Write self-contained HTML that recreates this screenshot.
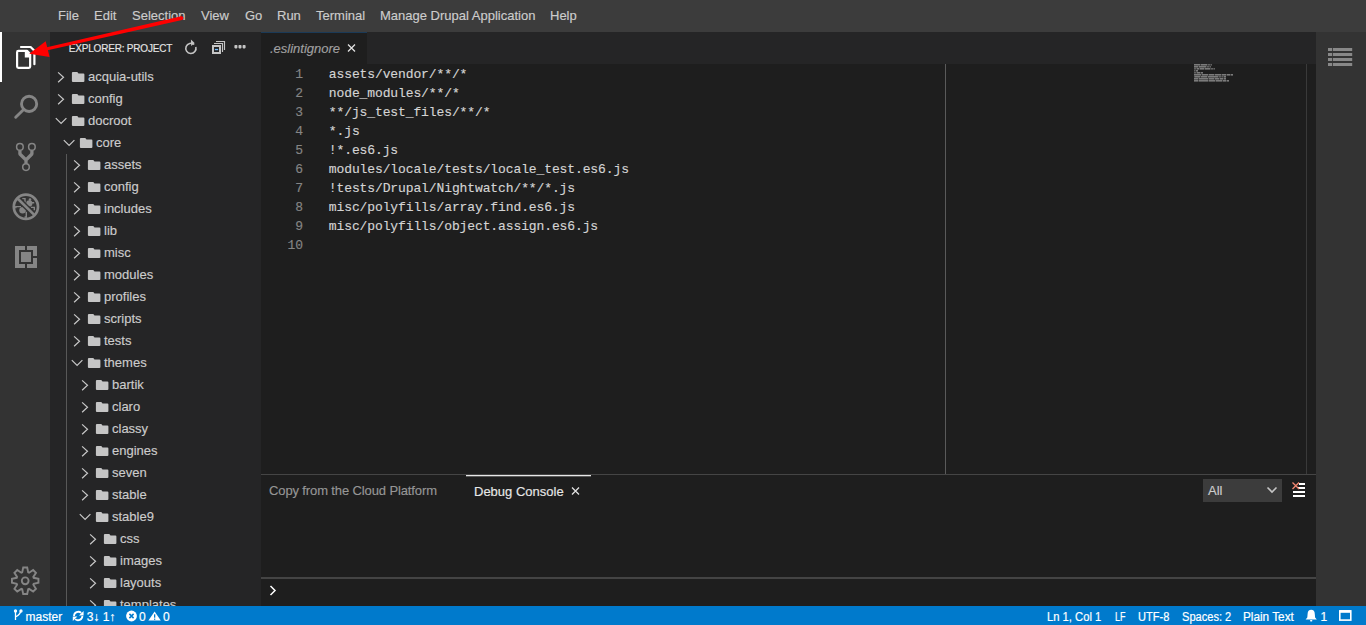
<!DOCTYPE html>
<html><head><meta charset="utf-8">
<style>
*{margin:0;padding:0;box-sizing:border-box}
html,body{width:1366px;height:625px;overflow:hidden;background:#1e1e1e;font-family:"Liberation Sans",sans-serif;font-size:13px;color:#cccccc}
.a{position:absolute}
.t{position:absolute;white-space:nowrap;-webkit-text-stroke:0.15px currentColor}
svg{position:absolute;overflow:visible}
</style></head><body>

<div class="a" style="left:0;top:0;width:1366px;height:32px;background:#3c3c3c">
<span class="t" style="left:58px;top:8px;color:#cccccc">File</span>
<span class="t" style="left:94px;top:8px;color:#cccccc">Edit</span>
<span class="t" style="left:132px;top:8px;color:#cccccc">Selection</span>
<span class="t" style="left:201px;top:8px;color:#cccccc">View</span>
<span class="t" style="left:245px;top:8px;color:#cccccc">Go</span>
<span class="t" style="left:277px;top:8px;color:#cccccc">Run</span>
<span class="t" style="left:316px;top:8px;color:#cccccc">Terminal</span>
<span class="t" style="left:380px;top:8px;color:#cccccc">Manage Drupal Application</span>
<span class="t" style="left:550px;top:8px;color:#cccccc">Help</span>
</div>
<div class="a" style="left:0;top:32px;width:50px;height:574px;background:#333333"></div>
<div class="a" style="left:0;top:32px;width:2px;height:50px;background:#ffffff"></div>
<svg style="left:0;top:0" width="50" height="625" viewBox="0 0 50 625">
<g fill="none" stroke="#ffffff" stroke-width="2.2" stroke-linejoin="round" stroke-linecap="round">
<path d="M17.1 52.2 Q17.1 50.9 18.4 50.9 H27 L30.15 54 V66.5 Q30.15 67.8 28.9 67.8 H18.4 Q17.1 67.8 17.1 66.5 Z"/>
<path d="M21 47 H30.6 L34.4 50.8 V64.2"/>
</g>
<path d="M24.8 51 H27 L30.1 54.1 V57.4 H24.8 Z" fill="#ffffff"/>
<g fill="none" stroke="#858585" stroke-width="2.9" stroke-linecap="round">
<circle cx="29.1" cy="103.9" r="7.6"/>
<path d="M23.9 109.3 L15.7 117.3"/>
</g>
<g fill="none" stroke="#858585" stroke-width="1.5">
<circle cx="19.9" cy="146.9" r="3.3"/><circle cx="31.9" cy="146.9" r="3.3"/><circle cx="26" cy="167.1" r="3.3"/>
</g>
<g fill="none" stroke="#858585" stroke-width="3.3" stroke-linejoin="bevel">
<path d="M19.9 150.5 V154 L26 160 V163.8 M31.9 150.5 V154 L26 160"/>
</g>
<g fill="#858585">
<circle cx="22.6" cy="210.2" r="3.3"/>
<circle cx="29.3" cy="203.4" r="3.1"/>
<circle cx="30" cy="199.6" r="1.3"/>
</g>
<g fill="none" stroke="#858585" stroke-width="1.4">
<path d="M22.3 198.6 H25 V202.8 M15.8 208.2 V206.6 H21 M31 207.4 H34.3 V210.2 M31.5 202.8 H34.2 M26.3 211.8 V217 H24.6"/>
</g>
<path d="M17.8 198.8 L34 214.6" stroke="#333333" stroke-width="5.4"/>
<path d="M17.8 198.8 L34 214.6" stroke="#858585" stroke-width="2.6"/>
<circle cx="25.9" cy="206.8" r="12.1" fill="none" stroke="#858585" stroke-width="2.7"/>
<g fill="#858585">
<path d="M15 246 H25 V250 H19 V264 H25 V268 H15 Z"/>
<path d="M27 246 H37 V256 H33 V250 H27 Z"/>
<path d="M27 264 H33 V258 H37 V268 H27 Z"/>
<rect x="21" y="252" width="10" height="10"/>
</g>
</svg>
<svg style="left:0;top:0" width="50" height="625"><path d="M22.20 572.32 L23.20 567.55 L27.20 567.55 L28.20 572.32 L29.08 572.68 L33.15 570.02 L35.98 572.85 L33.32 576.92 L33.68 577.80 L38.45 578.80 L38.45 582.80 L33.68 583.80 L33.32 584.68 L35.98 588.75 L33.15 591.58 L29.08 588.92 L28.20 589.28 L27.20 594.05 L23.20 594.05 L22.20 589.28 L21.32 588.92 L17.25 591.58 L14.42 588.75 L17.08 584.68 L16.72 583.80 L11.95 582.80 L11.95 578.80 L16.72 577.80 L17.08 576.92 L14.42 572.85 L17.25 570.02 L21.32 572.68 Z" fill="none" stroke="#858585" stroke-width="1.9" stroke-linejoin="miter"/>
<circle cx="25.2" cy="580.8" r="3.4" fill="none" stroke="#858585" stroke-width="1.9"/></svg>
<div class="a" style="left:50px;top:32px;width:211px;height:574px;background:#252526;overflow:hidden">
<span class="t" style="left:18.8px;top:11px;font-size:10px;letter-spacing:-0.2px;color:#e4e4e4">EXPLORER: PROJECT</span>
<svg style="left:0;top:0" width="211" height="574">
<g fill="none" stroke="#c5c5c5" stroke-width="1.6">
<path d="M144.2 12.5 A5.1 5.1 0 1 0 145.8 15"/>
</g>
<path d="M140.9 7.4 L144.6 11 L141.2 13.9 Z" fill="#c5c5c5"/>
<rect x="163" y="14" width="7" height="7" fill="none" stroke="#c5c5c5" stroke-width="2"/>
<path d="M164 11.5 H172.5 V20 M166 9.5 H174.5 V18" fill="none" stroke="#c5c5c5" stroke-width="1.15"/>
<rect x="164.9" y="16.9" width="3.2" height="1.3" fill="#75beff"/>
<g fill="#c5c5c5"><rect x="184.4" y="13" width="3" height="3.4" rx="0.8"/><rect x="188.5" y="13" width="3" height="3.4" rx="0.8"/><rect x="192.6" y="13" width="3" height="3.4" rx="0.8"/></g>
<rect x="16" y="122" width="1" height="452" fill="#585858"/>
</svg>
<svg style="left:0;top:0" width="211" height="574"><path d="M8.1 40.4 L13.5 45.3 L8.1 50.2" fill="none" stroke="#c8c8c8" stroke-width="1.2"/><path d="M21.9 41.1 Q21.9 40.1 22.9 40.1 H27.3 L28.5 41.5 H33.4 Q34.4 41.6 34.4 42.6 V49.0 Q34.4 50.0 33.4 50.0 H22.9 Q21.9 50.0 21.9 49.0 Z" fill="#c5c5c5"/></svg>
<span class="t" style="left:38.0px;top:37px;color:#cccccc">acquia-utils</span>
<svg style="left:0;top:0" width="211" height="574"><path d="M8.1 62.4 L13.5 67.3 L8.1 72.2" fill="none" stroke="#c8c8c8" stroke-width="1.2"/><path d="M21.9 63.1 Q21.9 62.1 22.9 62.1 H27.3 L28.5 63.5 H33.4 Q34.4 63.6 34.4 64.6 V71.0 Q34.4 72.0 33.4 72.0 H22.9 Q21.9 72.0 21.9 71.0 Z" fill="#c5c5c5"/></svg>
<span class="t" style="left:38.0px;top:59px;color:#cccccc">config</span>
<svg style="left:0;top:0" width="211" height="574"><path d="M5.8 86.2 L11.1 91.5 L16.4 86.2" fill="none" stroke="#c8c8c8" stroke-width="1.2"/><path d="M21.9 85.1 Q21.9 84.1 22.9 84.1 H27.3 L28.5 85.5 H33.4 Q34.4 85.6 34.4 86.6 V93.0 Q34.4 94.0 33.4 94.0 H22.9 Q21.9 94.0 21.9 93.0 Z" fill="#c5c5c5"/></svg>
<span class="t" style="left:38.0px;top:81px;color:#cccccc">docroot</span>
<svg style="left:0;top:0" width="211" height="574"><path d="M13.8 108.2 L19.1 113.5 L24.4 108.2" fill="none" stroke="#c8c8c8" stroke-width="1.2"/><path d="M29.9 107.1 Q29.9 106.1 30.9 106.1 H35.3 L36.5 107.5 H41.4 Q42.4 107.6 42.4 108.6 V115.0 Q42.4 116.0 41.4 116.0 H30.9 Q29.9 116.0 29.9 115.0 Z" fill="#c5c5c5"/></svg>
<span class="t" style="left:46.0px;top:103px;color:#cccccc">core</span>
<svg style="left:0;top:0" width="211" height="574"><path d="M24.1 128.4 L29.5 133.3 L24.1 138.2" fill="none" stroke="#c8c8c8" stroke-width="1.2"/><path d="M37.9 129.1 Q37.9 128.1 38.9 128.1 H43.3 L44.5 129.5 H49.4 Q50.4 129.6 50.4 130.6 V137.0 Q50.4 138.0 49.4 138.0 H38.9 Q37.9 138.0 37.9 137.0 Z" fill="#c5c5c5"/></svg>
<span class="t" style="left:54.0px;top:125px;color:#cccccc">assets</span>
<svg style="left:0;top:0" width="211" height="574"><path d="M24.1 150.4 L29.5 155.3 L24.1 160.2" fill="none" stroke="#c8c8c8" stroke-width="1.2"/><path d="M37.9 151.1 Q37.9 150.1 38.9 150.1 H43.3 L44.5 151.5 H49.4 Q50.4 151.6 50.4 152.6 V159.0 Q50.4 160.0 49.4 160.0 H38.9 Q37.9 160.0 37.9 159.0 Z" fill="#c5c5c5"/></svg>
<span class="t" style="left:54.0px;top:147px;color:#cccccc">config</span>
<svg style="left:0;top:0" width="211" height="574"><path d="M24.1 172.4 L29.5 177.3 L24.1 182.2" fill="none" stroke="#c8c8c8" stroke-width="1.2"/><path d="M37.9 173.1 Q37.9 172.1 38.9 172.1 H43.3 L44.5 173.5 H49.4 Q50.4 173.6 50.4 174.6 V181.0 Q50.4 182.0 49.4 182.0 H38.9 Q37.9 182.0 37.9 181.0 Z" fill="#c5c5c5"/></svg>
<span class="t" style="left:54.0px;top:169px;color:#cccccc">includes</span>
<svg style="left:0;top:0" width="211" height="574"><path d="M24.1 194.4 L29.5 199.3 L24.1 204.2" fill="none" stroke="#c8c8c8" stroke-width="1.2"/><path d="M37.9 195.1 Q37.9 194.1 38.9 194.1 H43.3 L44.5 195.5 H49.4 Q50.4 195.6 50.4 196.6 V203.0 Q50.4 204.0 49.4 204.0 H38.9 Q37.9 204.0 37.9 203.0 Z" fill="#c5c5c5"/></svg>
<span class="t" style="left:54.0px;top:191px;color:#cccccc">lib</span>
<svg style="left:0;top:0" width="211" height="574"><path d="M24.1 216.4 L29.5 221.3 L24.1 226.2" fill="none" stroke="#c8c8c8" stroke-width="1.2"/><path d="M37.9 217.1 Q37.9 216.1 38.9 216.1 H43.3 L44.5 217.5 H49.4 Q50.4 217.6 50.4 218.6 V225.0 Q50.4 226.0 49.4 226.0 H38.9 Q37.9 226.0 37.9 225.0 Z" fill="#c5c5c5"/></svg>
<span class="t" style="left:54.0px;top:213px;color:#cccccc">misc</span>
<svg style="left:0;top:0" width="211" height="574"><path d="M24.1 238.4 L29.5 243.3 L24.1 248.2" fill="none" stroke="#c8c8c8" stroke-width="1.2"/><path d="M37.9 239.1 Q37.9 238.1 38.9 238.1 H43.3 L44.5 239.5 H49.4 Q50.4 239.6 50.4 240.6 V247.0 Q50.4 248.0 49.4 248.0 H38.9 Q37.9 248.0 37.9 247.0 Z" fill="#c5c5c5"/></svg>
<span class="t" style="left:54.0px;top:235px;color:#cccccc">modules</span>
<svg style="left:0;top:0" width="211" height="574"><path d="M24.1 260.4 L29.5 265.3 L24.1 270.2" fill="none" stroke="#c8c8c8" stroke-width="1.2"/><path d="M37.9 261.1 Q37.9 260.1 38.9 260.1 H43.3 L44.5 261.5 H49.4 Q50.4 261.6 50.4 262.6 V269.0 Q50.4 270.0 49.4 270.0 H38.9 Q37.9 270.0 37.9 269.0 Z" fill="#c5c5c5"/></svg>
<span class="t" style="left:54.0px;top:257px;color:#cccccc">profiles</span>
<svg style="left:0;top:0" width="211" height="574"><path d="M24.1 282.4 L29.5 287.3 L24.1 292.2" fill="none" stroke="#c8c8c8" stroke-width="1.2"/><path d="M37.9 283.1 Q37.9 282.1 38.9 282.1 H43.3 L44.5 283.5 H49.4 Q50.4 283.6 50.4 284.6 V291.0 Q50.4 292.0 49.4 292.0 H38.9 Q37.9 292.0 37.9 291.0 Z" fill="#c5c5c5"/></svg>
<span class="t" style="left:54.0px;top:279px;color:#cccccc">scripts</span>
<svg style="left:0;top:0" width="211" height="574"><path d="M24.1 304.4 L29.5 309.3 L24.1 314.2" fill="none" stroke="#c8c8c8" stroke-width="1.2"/><path d="M37.9 305.1 Q37.9 304.1 38.9 304.1 H43.3 L44.5 305.5 H49.4 Q50.4 305.6 50.4 306.6 V313.0 Q50.4 314.0 49.4 314.0 H38.9 Q37.9 314.0 37.9 313.0 Z" fill="#c5c5c5"/></svg>
<span class="t" style="left:54.0px;top:301px;color:#cccccc">tests</span>
<svg style="left:0;top:0" width="211" height="574"><path d="M21.8 328.2 L27.1 333.5 L32.4 328.2" fill="none" stroke="#c8c8c8" stroke-width="1.2"/><path d="M37.9 327.1 Q37.9 326.1 38.9 326.1 H43.3 L44.5 327.5 H49.4 Q50.4 327.6 50.4 328.6 V335.0 Q50.4 336.0 49.4 336.0 H38.9 Q37.9 336.0 37.9 335.0 Z" fill="#c5c5c5"/></svg>
<span class="t" style="left:54.0px;top:323px;color:#cccccc">themes</span>
<svg style="left:0;top:0" width="211" height="574"><path d="M32.1 348.4 L37.5 353.3 L32.1 358.2" fill="none" stroke="#c8c8c8" stroke-width="1.2"/><path d="M45.9 349.1 Q45.9 348.1 46.9 348.1 H51.3 L52.5 349.5 H57.4 Q58.4 349.6 58.4 350.6 V357.0 Q58.4 358.0 57.4 358.0 H46.9 Q45.9 358.0 45.9 357.0 Z" fill="#c5c5c5"/></svg>
<span class="t" style="left:62.0px;top:345px;color:#cccccc">bartik</span>
<svg style="left:0;top:0" width="211" height="574"><path d="M32.1 370.4 L37.5 375.3 L32.1 380.2" fill="none" stroke="#c8c8c8" stroke-width="1.2"/><path d="M45.9 371.1 Q45.9 370.1 46.9 370.1 H51.3 L52.5 371.5 H57.4 Q58.4 371.6 58.4 372.6 V379.0 Q58.4 380.0 57.4 380.0 H46.9 Q45.9 380.0 45.9 379.0 Z" fill="#c5c5c5"/></svg>
<span class="t" style="left:62.0px;top:367px;color:#cccccc">claro</span>
<svg style="left:0;top:0" width="211" height="574"><path d="M32.1 392.4 L37.5 397.3 L32.1 402.2" fill="none" stroke="#c8c8c8" stroke-width="1.2"/><path d="M45.9 393.1 Q45.9 392.1 46.9 392.1 H51.3 L52.5 393.5 H57.4 Q58.4 393.6 58.4 394.6 V401.0 Q58.4 402.0 57.4 402.0 H46.9 Q45.9 402.0 45.9 401.0 Z" fill="#c5c5c5"/></svg>
<span class="t" style="left:62.0px;top:389px;color:#cccccc">classy</span>
<svg style="left:0;top:0" width="211" height="574"><path d="M32.1 414.4 L37.5 419.3 L32.1 424.2" fill="none" stroke="#c8c8c8" stroke-width="1.2"/><path d="M45.9 415.1 Q45.9 414.1 46.9 414.1 H51.3 L52.5 415.5 H57.4 Q58.4 415.6 58.4 416.6 V423.0 Q58.4 424.0 57.4 424.0 H46.9 Q45.9 424.0 45.9 423.0 Z" fill="#c5c5c5"/></svg>
<span class="t" style="left:62.0px;top:411px;color:#cccccc">engines</span>
<svg style="left:0;top:0" width="211" height="574"><path d="M32.1 436.4 L37.5 441.3 L32.1 446.2" fill="none" stroke="#c8c8c8" stroke-width="1.2"/><path d="M45.9 437.1 Q45.9 436.1 46.9 436.1 H51.3 L52.5 437.5 H57.4 Q58.4 437.6 58.4 438.6 V445.0 Q58.4 446.0 57.4 446.0 H46.9 Q45.9 446.0 45.9 445.0 Z" fill="#c5c5c5"/></svg>
<span class="t" style="left:62.0px;top:433px;color:#cccccc">seven</span>
<svg style="left:0;top:0" width="211" height="574"><path d="M32.1 458.4 L37.5 463.3 L32.1 468.2" fill="none" stroke="#c8c8c8" stroke-width="1.2"/><path d="M45.9 459.1 Q45.9 458.1 46.9 458.1 H51.3 L52.5 459.5 H57.4 Q58.4 459.6 58.4 460.6 V467.0 Q58.4 468.0 57.4 468.0 H46.9 Q45.9 468.0 45.9 467.0 Z" fill="#c5c5c5"/></svg>
<span class="t" style="left:62.0px;top:455px;color:#cccccc">stable</span>
<svg style="left:0;top:0" width="211" height="574"><path d="M29.8 482.2 L35.1 487.5 L40.4 482.2" fill="none" stroke="#c8c8c8" stroke-width="1.2"/><path d="M45.9 481.1 Q45.9 480.1 46.9 480.1 H51.3 L52.5 481.5 H57.4 Q58.4 481.6 58.4 482.6 V489.0 Q58.4 490.0 57.4 490.0 H46.9 Q45.9 490.0 45.9 489.0 Z" fill="#c5c5c5"/></svg>
<span class="t" style="left:62.0px;top:477px;color:#cccccc">stable9</span>
<svg style="left:0;top:0" width="211" height="574"><path d="M40.1 502.4 L45.5 507.3 L40.1 512.2" fill="none" stroke="#c8c8c8" stroke-width="1.2"/><path d="M53.9 503.1 Q53.9 502.1 54.9 502.1 H59.3 L60.5 503.5 H65.4 Q66.4 503.6 66.4 504.6 V511.0 Q66.4 512.0 65.4 512.0 H54.9 Q53.9 512.0 53.9 511.0 Z" fill="#c5c5c5"/></svg>
<span class="t" style="left:70.0px;top:499px;color:#cccccc">css</span>
<svg style="left:0;top:0" width="211" height="574"><path d="M40.1 524.4 L45.5 529.3 L40.1 534.2" fill="none" stroke="#c8c8c8" stroke-width="1.2"/><path d="M53.9 525.1 Q53.9 524.1 54.9 524.1 H59.3 L60.5 525.5 H65.4 Q66.4 525.6 66.4 526.6 V533.0 Q66.4 534.0 65.4 534.0 H54.9 Q53.9 534.0 53.9 533.0 Z" fill="#c5c5c5"/></svg>
<span class="t" style="left:70.0px;top:521px;color:#cccccc">images</span>
<svg style="left:0;top:0" width="211" height="574"><path d="M40.1 546.4 L45.5 551.3 L40.1 556.2" fill="none" stroke="#c8c8c8" stroke-width="1.2"/><path d="M53.9 547.1 Q53.9 546.1 54.9 546.1 H59.3 L60.5 547.5 H65.4 Q66.4 547.6 66.4 548.6 V555.0 Q66.4 556.0 65.4 556.0 H54.9 Q53.9 556.0 53.9 555.0 Z" fill="#c5c5c5"/></svg>
<span class="t" style="left:70.0px;top:543px;color:#cccccc">layouts</span>
<svg style="left:0;top:0" width="211" height="574"><path d="M40.1 568.4 L45.5 573.3 L40.1 578.2" fill="none" stroke="#c8c8c8" stroke-width="1.2"/><path d="M53.9 569.1 Q53.9 568.1 54.9 568.1 H59.3 L60.5 569.5 H65.4 Q66.4 569.6 66.4 570.6 V577.0 Q66.4 578.0 65.4 578.0 H54.9 Q53.9 578.0 53.9 577.0 Z" fill="#c5c5c5"/></svg>
<span class="t" style="left:70.0px;top:565px;color:#cccccc">templates</span>
</div>
<div class="a" style="left:261px;top:32px;width:1055px;height:32px;background:#252526"></div>
<div class="a" style="left:261px;top:32px;width:106px;height:32px;background:#1e1e1e;border-top:1px solid #1b3a57"></div>
<span class="t" style="left:270px;top:41px;font-style:italic;color:#a0a0a0">.eslintignore</span>
<svg style="left:0;top:0" width="1366" height="625"><path d="M348 44.5 L355 51.5 M355 44.5 L348 51.5" stroke="#e0e0e0" stroke-width="1.3"/></svg>
<div class="a" style="left:261px;top:64px;width:1055px;height:410px;background:#1e1e1e"></div>
<span class="t" style="left:262px;width:41px;text-align:right;top:65px;line-height:19px;font-family:'Liberation Mono',monospace;font-size:13px;color:#858585">1</span>
<span class="t" style="left:328.8px;top:65px;line-height:19px;font-family:'Liberation Mono',monospace;font-size:13px;letter-spacing:-0.108px;color:#d4d4d4">assets/vendor/**/*</span>
<span class="t" style="left:262px;width:41px;text-align:right;top:84px;line-height:19px;font-family:'Liberation Mono',monospace;font-size:13px;color:#858585">2</span>
<span class="t" style="left:328.8px;top:84px;line-height:19px;font-family:'Liberation Mono',monospace;font-size:13px;letter-spacing:-0.108px;color:#d4d4d4">node_modules/**/*</span>
<span class="t" style="left:262px;width:41px;text-align:right;top:103px;line-height:19px;font-family:'Liberation Mono',monospace;font-size:13px;color:#858585">3</span>
<span class="t" style="left:328.8px;top:103px;line-height:19px;font-family:'Liberation Mono',monospace;font-size:13px;letter-spacing:-0.108px;color:#d4d4d4">**/js_test_files/**/*</span>
<span class="t" style="left:262px;width:41px;text-align:right;top:122px;line-height:19px;font-family:'Liberation Mono',monospace;font-size:13px;color:#858585">4</span>
<span class="t" style="left:328.8px;top:122px;line-height:19px;font-family:'Liberation Mono',monospace;font-size:13px;letter-spacing:-0.108px;color:#d4d4d4">*.js</span>
<span class="t" style="left:262px;width:41px;text-align:right;top:141px;line-height:19px;font-family:'Liberation Mono',monospace;font-size:13px;color:#858585">5</span>
<span class="t" style="left:328.8px;top:141px;line-height:19px;font-family:'Liberation Mono',monospace;font-size:13px;letter-spacing:-0.108px;color:#d4d4d4">!*.es6.js</span>
<span class="t" style="left:262px;width:41px;text-align:right;top:160px;line-height:19px;font-family:'Liberation Mono',monospace;font-size:13px;color:#858585">6</span>
<span class="t" style="left:328.8px;top:160px;line-height:19px;font-family:'Liberation Mono',monospace;font-size:13px;letter-spacing:-0.108px;color:#d4d4d4">modules/locale/tests/locale_test.es6.js</span>
<span class="t" style="left:262px;width:41px;text-align:right;top:179px;line-height:19px;font-family:'Liberation Mono',monospace;font-size:13px;color:#858585">7</span>
<span class="t" style="left:328.8px;top:179px;line-height:19px;font-family:'Liberation Mono',monospace;font-size:13px;letter-spacing:-0.108px;color:#d4d4d4">!tests/Drupal/Nightwatch/**/*.js</span>
<span class="t" style="left:262px;width:41px;text-align:right;top:198px;line-height:19px;font-family:'Liberation Mono',monospace;font-size:13px;color:#858585">8</span>
<span class="t" style="left:328.8px;top:198px;line-height:19px;font-family:'Liberation Mono',monospace;font-size:13px;letter-spacing:-0.108px;color:#d4d4d4">misc/polyfills/array.find.es6.js</span>
<span class="t" style="left:262px;width:41px;text-align:right;top:217px;line-height:19px;font-family:'Liberation Mono',monospace;font-size:13px;color:#858585">9</span>
<span class="t" style="left:328.8px;top:217px;line-height:19px;font-family:'Liberation Mono',monospace;font-size:13px;letter-spacing:-0.108px;color:#d4d4d4">misc/polyfills/object.assign.es6.js</span>
<span class="t" style="left:262px;width:41px;text-align:right;top:236px;line-height:19px;font-family:'Liberation Mono',monospace;font-size:13px;color:#858585">10</span>
<div class="a" style="left:945px;top:64px;width:1px;height:410px;background:#5a5a5a"></div>
<div class="a" style="left:1306px;top:64px;width:1px;height:410px;background:#3a3a3a"></div>
<svg style="left:0;top:0" width="1366" height="625"><g fill="#c8c8c8"><rect x="1194" y="64" width="1" height="1.6" fill-opacity="0.55"/><rect x="1195" y="64" width="1" height="1.6" fill-opacity="0.55"/><rect x="1196" y="64" width="1" height="1.6" fill-opacity="0.55"/><rect x="1197" y="64" width="1" height="1.6" fill-opacity="0.55"/><rect x="1198" y="64" width="1" height="1.6" fill-opacity="0.55"/><rect x="1199" y="64" width="1" height="1.6" fill-opacity="0.55"/><rect x="1200" y="64" width="1" height="1.6" fill-opacity="0.25"/><rect x="1201" y="64" width="1" height="1.6" fill-opacity="0.55"/><rect x="1202" y="64" width="1" height="1.6" fill-opacity="0.55"/><rect x="1203" y="64" width="1" height="1.6" fill-opacity="0.55"/><rect x="1204" y="64" width="1" height="1.6" fill-opacity="0.55"/><rect x="1205" y="64" width="1" height="1.6" fill-opacity="0.55"/><rect x="1206" y="64" width="1" height="1.6" fill-opacity="0.55"/><rect x="1207" y="64" width="1" height="1.6" fill-opacity="0.25"/><rect x="1208" y="64" width="1" height="1.6" fill-opacity="0.4"/><rect x="1209" y="64" width="1" height="1.6" fill-opacity="0.4"/><rect x="1210" y="64" width="1" height="1.6" fill-opacity="0.25"/><rect x="1211" y="64" width="1" height="1.6" fill-opacity="0.4"/><rect x="1194" y="66" width="1" height="1.6" fill-opacity="0.55"/><rect x="1195" y="66" width="1" height="1.6" fill-opacity="0.55"/><rect x="1196" y="66" width="1" height="1.6" fill-opacity="0.55"/><rect x="1197" y="66" width="1" height="1.6" fill-opacity="0.55"/><rect x="1198" y="66" width="1" height="1.6" fill-opacity="0.25"/><rect x="1199" y="66" width="1" height="1.6" fill-opacity="0.55"/><rect x="1200" y="66" width="1" height="1.6" fill-opacity="0.55"/><rect x="1201" y="66" width="1" height="1.6" fill-opacity="0.55"/><rect x="1202" y="66" width="1" height="1.6" fill-opacity="0.55"/><rect x="1203" y="66" width="1" height="1.6" fill-opacity="0.55"/><rect x="1204" y="66" width="1" height="1.6" fill-opacity="0.55"/><rect x="1205" y="66" width="1" height="1.6" fill-opacity="0.55"/><rect x="1206" y="66" width="1" height="1.6" fill-opacity="0.25"/><rect x="1207" y="66" width="1" height="1.6" fill-opacity="0.4"/><rect x="1208" y="66" width="1" height="1.6" fill-opacity="0.4"/><rect x="1209" y="66" width="1" height="1.6" fill-opacity="0.25"/><rect x="1210" y="66" width="1" height="1.6" fill-opacity="0.4"/><rect x="1194" y="68" width="1" height="1.6" fill-opacity="0.4"/><rect x="1195" y="68" width="1" height="1.6" fill-opacity="0.4"/><rect x="1196" y="68" width="1" height="1.6" fill-opacity="0.25"/><rect x="1197" y="68" width="1" height="1.6" fill-opacity="0.55"/><rect x="1198" y="68" width="1" height="1.6" fill-opacity="0.55"/><rect x="1199" y="68" width="1" height="1.6" fill-opacity="0.25"/><rect x="1200" y="68" width="1" height="1.6" fill-opacity="0.55"/><rect x="1201" y="68" width="1" height="1.6" fill-opacity="0.55"/><rect x="1202" y="68" width="1" height="1.6" fill-opacity="0.55"/><rect x="1203" y="68" width="1" height="1.6" fill-opacity="0.55"/><rect x="1204" y="68" width="1" height="1.6" fill-opacity="0.25"/><rect x="1205" y="68" width="1" height="1.6" fill-opacity="0.55"/><rect x="1206" y="68" width="1" height="1.6" fill-opacity="0.55"/><rect x="1207" y="68" width="1" height="1.6" fill-opacity="0.55"/><rect x="1208" y="68" width="1" height="1.6" fill-opacity="0.55"/><rect x="1209" y="68" width="1" height="1.6" fill-opacity="0.55"/><rect x="1210" y="68" width="1" height="1.6" fill-opacity="0.25"/><rect x="1211" y="68" width="1" height="1.6" fill-opacity="0.4"/><rect x="1212" y="68" width="1" height="1.6" fill-opacity="0.4"/><rect x="1213" y="68" width="1" height="1.6" fill-opacity="0.25"/><rect x="1214" y="68" width="1" height="1.6" fill-opacity="0.4"/><rect x="1194" y="70" width="1" height="1.6" fill-opacity="0.4"/><rect x="1195" y="70" width="1" height="1.6" fill-opacity="0.25"/><rect x="1196" y="70" width="1" height="1.6" fill-opacity="0.55"/><rect x="1197" y="70" width="1" height="1.6" fill-opacity="0.55"/><rect x="1194" y="72" width="1" height="1.6" fill-opacity="0.4"/><rect x="1195" y="72" width="1" height="1.6" fill-opacity="0.4"/><rect x="1196" y="72" width="1" height="1.6" fill-opacity="0.25"/><rect x="1197" y="72" width="1" height="1.6" fill-opacity="0.55"/><rect x="1198" y="72" width="1" height="1.6" fill-opacity="0.55"/><rect x="1199" y="72" width="1" height="1.6" fill-opacity="0.55"/><rect x="1200" y="72" width="1" height="1.6" fill-opacity="0.25"/><rect x="1201" y="72" width="1" height="1.6" fill-opacity="0.55"/><rect x="1202" y="72" width="1" height="1.6" fill-opacity="0.55"/><rect x="1194" y="74" width="1" height="1.6" fill-opacity="0.55"/><rect x="1195" y="74" width="1" height="1.6" fill-opacity="0.55"/><rect x="1196" y="74" width="1" height="1.6" fill-opacity="0.55"/><rect x="1197" y="74" width="1" height="1.6" fill-opacity="0.55"/><rect x="1198" y="74" width="1" height="1.6" fill-opacity="0.55"/><rect x="1199" y="74" width="1" height="1.6" fill-opacity="0.55"/><rect x="1200" y="74" width="1" height="1.6" fill-opacity="0.55"/><rect x="1201" y="74" width="1" height="1.6" fill-opacity="0.25"/><rect x="1202" y="74" width="1" height="1.6" fill-opacity="0.55"/><rect x="1203" y="74" width="1" height="1.6" fill-opacity="0.55"/><rect x="1204" y="74" width="1" height="1.6" fill-opacity="0.55"/><rect x="1205" y="74" width="1" height="1.6" fill-opacity="0.55"/><rect x="1206" y="74" width="1" height="1.6" fill-opacity="0.55"/><rect x="1207" y="74" width="1" height="1.6" fill-opacity="0.55"/><rect x="1208" y="74" width="1" height="1.6" fill-opacity="0.25"/><rect x="1209" y="74" width="1" height="1.6" fill-opacity="0.55"/><rect x="1210" y="74" width="1" height="1.6" fill-opacity="0.55"/><rect x="1211" y="74" width="1" height="1.6" fill-opacity="0.55"/><rect x="1212" y="74" width="1" height="1.6" fill-opacity="0.55"/><rect x="1213" y="74" width="1" height="1.6" fill-opacity="0.55"/><rect x="1214" y="74" width="1" height="1.6" fill-opacity="0.25"/><rect x="1215" y="74" width="1" height="1.6" fill-opacity="0.55"/><rect x="1216" y="74" width="1" height="1.6" fill-opacity="0.55"/><rect x="1217" y="74" width="1" height="1.6" fill-opacity="0.55"/><rect x="1218" y="74" width="1" height="1.6" fill-opacity="0.55"/><rect x="1219" y="74" width="1" height="1.6" fill-opacity="0.55"/><rect x="1220" y="74" width="1" height="1.6" fill-opacity="0.55"/><rect x="1221" y="74" width="1" height="1.6" fill-opacity="0.25"/><rect x="1222" y="74" width="1" height="1.6" fill-opacity="0.55"/><rect x="1223" y="74" width="1" height="1.6" fill-opacity="0.55"/><rect x="1224" y="74" width="1" height="1.6" fill-opacity="0.55"/><rect x="1225" y="74" width="1" height="1.6" fill-opacity="0.55"/><rect x="1226" y="74" width="1" height="1.6" fill-opacity="0.25"/><rect x="1227" y="74" width="1" height="1.6" fill-opacity="0.55"/><rect x="1228" y="74" width="1" height="1.6" fill-opacity="0.55"/><rect x="1229" y="74" width="1" height="1.6" fill-opacity="0.55"/><rect x="1230" y="74" width="1" height="1.6" fill-opacity="0.25"/><rect x="1231" y="74" width="1" height="1.6" fill-opacity="0.55"/><rect x="1232" y="74" width="1" height="1.6" fill-opacity="0.55"/><rect x="1194" y="76" width="1" height="1.6" fill-opacity="0.4"/><rect x="1195" y="76" width="1" height="1.6" fill-opacity="0.55"/><rect x="1196" y="76" width="1" height="1.6" fill-opacity="0.55"/><rect x="1197" y="76" width="1" height="1.6" fill-opacity="0.55"/><rect x="1198" y="76" width="1" height="1.6" fill-opacity="0.55"/><rect x="1199" y="76" width="1" height="1.6" fill-opacity="0.55"/><rect x="1200" y="76" width="1" height="1.6" fill-opacity="0.25"/><rect x="1201" y="76" width="1" height="1.6" fill-opacity="0.55"/><rect x="1202" y="76" width="1" height="1.6" fill-opacity="0.55"/><rect x="1203" y="76" width="1" height="1.6" fill-opacity="0.55"/><rect x="1204" y="76" width="1" height="1.6" fill-opacity="0.55"/><rect x="1205" y="76" width="1" height="1.6" fill-opacity="0.55"/><rect x="1206" y="76" width="1" height="1.6" fill-opacity="0.55"/><rect x="1207" y="76" width="1" height="1.6" fill-opacity="0.25"/><rect x="1208" y="76" width="1" height="1.6" fill-opacity="0.55"/><rect x="1209" y="76" width="1" height="1.6" fill-opacity="0.55"/><rect x="1210" y="76" width="1" height="1.6" fill-opacity="0.55"/><rect x="1211" y="76" width="1" height="1.6" fill-opacity="0.55"/><rect x="1212" y="76" width="1" height="1.6" fill-opacity="0.55"/><rect x="1213" y="76" width="1" height="1.6" fill-opacity="0.55"/><rect x="1214" y="76" width="1" height="1.6" fill-opacity="0.55"/><rect x="1215" y="76" width="1" height="1.6" fill-opacity="0.55"/><rect x="1216" y="76" width="1" height="1.6" fill-opacity="0.55"/><rect x="1217" y="76" width="1" height="1.6" fill-opacity="0.55"/><rect x="1218" y="76" width="1" height="1.6" fill-opacity="0.25"/><rect x="1219" y="76" width="1" height="1.6" fill-opacity="0.4"/><rect x="1220" y="76" width="1" height="1.6" fill-opacity="0.4"/><rect x="1221" y="76" width="1" height="1.6" fill-opacity="0.25"/><rect x="1222" y="76" width="1" height="1.6" fill-opacity="0.4"/><rect x="1223" y="76" width="1" height="1.6" fill-opacity="0.25"/><rect x="1224" y="76" width="1" height="1.6" fill-opacity="0.55"/><rect x="1225" y="76" width="1" height="1.6" fill-opacity="0.55"/><rect x="1194" y="78" width="1" height="1.6" fill-opacity="0.55"/><rect x="1195" y="78" width="1" height="1.6" fill-opacity="0.55"/><rect x="1196" y="78" width="1" height="1.6" fill-opacity="0.55"/><rect x="1197" y="78" width="1" height="1.6" fill-opacity="0.55"/><rect x="1198" y="78" width="1" height="1.6" fill-opacity="0.25"/><rect x="1199" y="78" width="1" height="1.6" fill-opacity="0.55"/><rect x="1200" y="78" width="1" height="1.6" fill-opacity="0.55"/><rect x="1201" y="78" width="1" height="1.6" fill-opacity="0.55"/><rect x="1202" y="78" width="1" height="1.6" fill-opacity="0.55"/><rect x="1203" y="78" width="1" height="1.6" fill-opacity="0.55"/><rect x="1204" y="78" width="1" height="1.6" fill-opacity="0.55"/><rect x="1205" y="78" width="1" height="1.6" fill-opacity="0.55"/><rect x="1206" y="78" width="1" height="1.6" fill-opacity="0.55"/><rect x="1207" y="78" width="1" height="1.6" fill-opacity="0.55"/><rect x="1208" y="78" width="1" height="1.6" fill-opacity="0.25"/><rect x="1209" y="78" width="1" height="1.6" fill-opacity="0.55"/><rect x="1210" y="78" width="1" height="1.6" fill-opacity="0.55"/><rect x="1211" y="78" width="1" height="1.6" fill-opacity="0.55"/><rect x="1212" y="78" width="1" height="1.6" fill-opacity="0.55"/><rect x="1213" y="78" width="1" height="1.6" fill-opacity="0.55"/><rect x="1214" y="78" width="1" height="1.6" fill-opacity="0.25"/><rect x="1215" y="78" width="1" height="1.6" fill-opacity="0.55"/><rect x="1216" y="78" width="1" height="1.6" fill-opacity="0.55"/><rect x="1217" y="78" width="1" height="1.6" fill-opacity="0.55"/><rect x="1218" y="78" width="1" height="1.6" fill-opacity="0.55"/><rect x="1219" y="78" width="1" height="1.6" fill-opacity="0.25"/><rect x="1220" y="78" width="1" height="1.6" fill-opacity="0.55"/><rect x="1221" y="78" width="1" height="1.6" fill-opacity="0.55"/><rect x="1222" y="78" width="1" height="1.6" fill-opacity="0.55"/><rect x="1223" y="78" width="1" height="1.6" fill-opacity="0.25"/><rect x="1224" y="78" width="1" height="1.6" fill-opacity="0.55"/><rect x="1225" y="78" width="1" height="1.6" fill-opacity="0.55"/><rect x="1194" y="80" width="1" height="1.6" fill-opacity="0.55"/><rect x="1195" y="80" width="1" height="1.6" fill-opacity="0.55"/><rect x="1196" y="80" width="1" height="1.6" fill-opacity="0.55"/><rect x="1197" y="80" width="1" height="1.6" fill-opacity="0.55"/><rect x="1198" y="80" width="1" height="1.6" fill-opacity="0.25"/><rect x="1199" y="80" width="1" height="1.6" fill-opacity="0.55"/><rect x="1200" y="80" width="1" height="1.6" fill-opacity="0.55"/><rect x="1201" y="80" width="1" height="1.6" fill-opacity="0.55"/><rect x="1202" y="80" width="1" height="1.6" fill-opacity="0.55"/><rect x="1203" y="80" width="1" height="1.6" fill-opacity="0.55"/><rect x="1204" y="80" width="1" height="1.6" fill-opacity="0.55"/><rect x="1205" y="80" width="1" height="1.6" fill-opacity="0.55"/><rect x="1206" y="80" width="1" height="1.6" fill-opacity="0.55"/><rect x="1207" y="80" width="1" height="1.6" fill-opacity="0.55"/><rect x="1208" y="80" width="1" height="1.6" fill-opacity="0.25"/><rect x="1209" y="80" width="1" height="1.6" fill-opacity="0.55"/><rect x="1210" y="80" width="1" height="1.6" fill-opacity="0.55"/><rect x="1211" y="80" width="1" height="1.6" fill-opacity="0.55"/><rect x="1212" y="80" width="1" height="1.6" fill-opacity="0.55"/><rect x="1213" y="80" width="1" height="1.6" fill-opacity="0.55"/><rect x="1214" y="80" width="1" height="1.6" fill-opacity="0.55"/><rect x="1215" y="80" width="1" height="1.6" fill-opacity="0.25"/><rect x="1216" y="80" width="1" height="1.6" fill-opacity="0.55"/><rect x="1217" y="80" width="1" height="1.6" fill-opacity="0.55"/><rect x="1218" y="80" width="1" height="1.6" fill-opacity="0.55"/><rect x="1219" y="80" width="1" height="1.6" fill-opacity="0.55"/><rect x="1220" y="80" width="1" height="1.6" fill-opacity="0.55"/><rect x="1221" y="80" width="1" height="1.6" fill-opacity="0.55"/><rect x="1222" y="80" width="1" height="1.6" fill-opacity="0.25"/><rect x="1223" y="80" width="1" height="1.6" fill-opacity="0.55"/><rect x="1224" y="80" width="1" height="1.6" fill-opacity="0.55"/><rect x="1225" y="80" width="1" height="1.6" fill-opacity="0.55"/><rect x="1226" y="80" width="1" height="1.6" fill-opacity="0.25"/><rect x="1227" y="80" width="1" height="1.6" fill-opacity="0.55"/><rect x="1228" y="80" width="1" height="1.6" fill-opacity="0.55"/></g></svg>
<div class="a" style="left:1316px;top:32px;width:50px;height:574px;background:#333333"></div>
<svg style="left:0;top:0" width="1366" height="625"><g fill="#888888"><rect x="1328" y="48" width="4" height="3"/><rect x="1332.8" y="48" width="19.4" height="3"/><rect x="1328" y="53" width="4" height="3"/><rect x="1332.8" y="53" width="19.4" height="3"/><rect x="1328" y="58" width="4" height="3"/><rect x="1332.8" y="58" width="19.4" height="3"/><rect x="1328" y="63" width="4" height="3"/><rect x="1332.8" y="63" width="19.4" height="3"/></g></svg>
<div class="a" style="left:261px;top:474px;width:1055px;height:132px;background:#1e1e1e;border-top:1px solid #454545"></div>
<div class="a" style="left:466px;top:475px;width:125px;height:1px;background:#e7e7e7"></div><div class="a" style="left:466px;top:476px;width:125px;height:1px;background:rgba(231,231,231,0.3)"></div>
<span class="t" style="left:269px;top:483px;color:#969696;letter-spacing:-0.12px">Copy from the Cloud Platform</span>
<span class="t" style="left:474px;top:484px;color:#e7e7e7">Debug Console</span>
<svg style="left:0;top:0" width="1366" height="625"><path d="M572 487.5 L579 494.5 M579 487.5 L572 494.5" stroke="#e0e0e0" stroke-width="1.3"/></svg>
<div class="a" style="left:1203px;top:479px;width:79px;height:23px;background:#3c3c3c"></div>
<span class="t" style="left:1208px;top:483px;color:#cccccc;font-size:13px">All</span>
<svg style="left:0;top:0" width="1366" height="625"><path d="M1267.5 487.5 L1272 492 L1276.5 487.5" fill="none" stroke="#c5c5c5" stroke-width="1.6"/><g fill="#ffffff"><rect x="1299" y="483" width="6" height="2"/><rect x="1298" y="487" width="7" height="2"/><rect x="1293" y="491" width="12" height="2"/><rect x="1293" y="495" width="12" height="2"/></g><path d="M1292.5 482.5 L1299 489 M1299 482.5 L1292.5 489" stroke="#f48771" stroke-width="1.3"/></svg>
<div class="a" style="left:261px;top:577px;width:1055px;height:2px;background:#444444"></div>
<svg style="left:0;top:0" width="1366" height="625"><path d="M270.5 586 L275 590.5 L270.5 595" fill="none" stroke="#ffffff" stroke-width="1.5"/></svg>
<div class="a" style="left:0;top:606px;width:1366px;height:19px;background:#007acc"></div>
<svg style="left:0;top:0" width="1366" height="625">
<g fill="none" stroke="#ffffff" stroke-width="1.3">
<path d="M15.5 610.5 V620 M15.5 617 Q21 614 20.5 610.5"/>
<circle cx="15.5" cy="611" r="1"/><circle cx="21" cy="611" r="1"/>
</g>
<g fill="none" stroke="#ffffff" stroke-width="1.8">
<path d="M74 616 A4.3 4.3 0 0 1 81.2 612.9"/><path d="M82.4 616 A4.3 4.3 0 0 1 75.2 619.1"/>
</g>
<path d="M83.6 611 V615.6 H79 Z M72.8 621 V616.4 H77.4 Z" fill="#ffffff"/>
<circle cx="131.5" cy="616" r="5.4" fill="#ffffff"/>
<path d="M129.4 613.9 L133.6 618.1 M133.6 613.9 L129.4 618.1" stroke="#007acc" stroke-width="1.5"/>
<path d="M154.6 611.5 L160.8 620.6 H148.4 Z" fill="#ffffff"/>
<rect x="154" y="614.3" width="1.3" height="3.4" fill="#007acc"/><rect x="154" y="618.6" width="1.3" height="1.2" fill="#007acc"/>
<path d="M1311.2 609.8 Q1307.8 609.8 1307.6 614 L1307.3 617.5 L1305.6 619.6 H1316.8 L1315.1 617.5 L1314.8 614 Q1314.6 609.8 1311.2 609.8 Z" fill="#ffffff"/>
<rect x="1310" y="620" width="2.4" height="1.6" rx="0.8" fill="#ffffff"/>
<rect x="1339.8" y="610.9" width="11" height="9.2" fill="none" stroke="#ffffff" stroke-width="1.6"/>
<rect x="1339.8" y="610.2" width="11" height="2.6" fill="#ffffff"/>
</g>
</svg>
<span class="t" style="left:25.6px;top:610px;color:#ffffff;font-size:12px;-webkit-text-stroke:0.2px #ffffff;transform-origin:0 0;transform:scaleX(1)">master</span>
<span class="t" style="left:86.7px;top:610px;color:#ffffff;font-size:12px;-webkit-text-stroke:0.2px #ffffff;transform-origin:0 0;transform:scaleX(1)">3↓ 1↑</span>
<span class="t" style="left:139px;top:610px;color:#ffffff;font-size:12px;-webkit-text-stroke:0.2px #ffffff;transform-origin:0 0;transform:scaleX(1)">0</span>
<span class="t" style="left:163px;top:610px;color:#ffffff;font-size:12px;-webkit-text-stroke:0.2px #ffffff;transform-origin:0 0;transform:scaleX(1)">0</span>
<span class="t" style="left:1047px;top:610px;color:#ffffff;font-size:12px;-webkit-text-stroke:0.2px #ffffff;transform-origin:0 0;transform:scaleX(0.935)">Ln 1, Col 1</span>
<span class="t" style="left:1114.5px;top:610px;color:#ffffff;font-size:12px;-webkit-text-stroke:0.2px #ffffff;transform-origin:0 0;transform:scaleX(0.75)">LF</span>
<span class="t" style="left:1138px;top:610px;color:#ffffff;font-size:12px;-webkit-text-stroke:0.2px #ffffff;transform-origin:0 0;transform:scaleX(0.92)">UTF-8</span>
<span class="t" style="left:1181.5px;top:610px;color:#ffffff;font-size:12px;-webkit-text-stroke:0.2px #ffffff;transform-origin:0 0;transform:scaleX(0.923)">Spaces: 2</span>
<span class="t" style="left:1242.5px;top:610px;color:#ffffff;font-size:12px;-webkit-text-stroke:0.2px #ffffff;transform-origin:0 0;transform:scaleX(0.98)">Plain Text</span>
<span class="t" style="left:1320.4px;top:610px;color:#ffffff;font-size:12px;-webkit-text-stroke:0.2px #ffffff;transform-origin:0 0;transform:scaleX(1)">1</span>
<svg style="left:0;top:0" width="1366" height="625">
<path d="M181.19 16.25 L43.65 47.9 L44.35 50.9 L182.01 19.95 Z" fill="#ff0000"/><circle cx="181.6" cy="18.1" r="1.9" fill="#ff0000"/>
<path d="M29.2 53.8 L45.7 41.2 L49.6 57 Z" fill="#ff0000"/>
</svg>
</body></html>
